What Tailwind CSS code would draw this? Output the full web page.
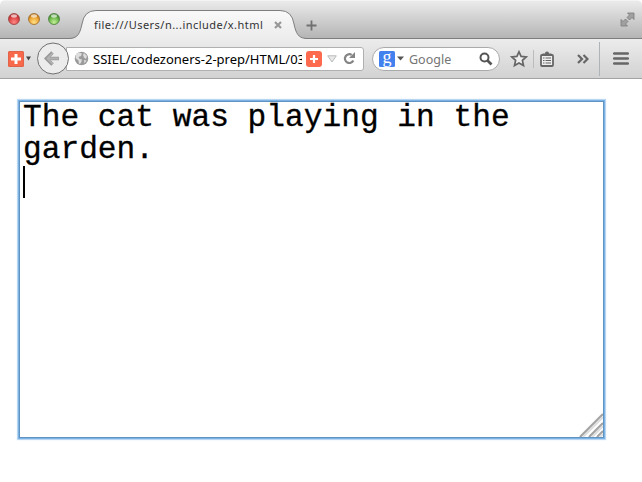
<!DOCTYPE html>
<html lang="en">
<head>
<meta charset="utf-8">
<title>x.html</title>
<script src="https://cdn.jsdelivr.net/npm/@tailwindcss/browser@4"></script>
</head>
<body class="w-[642px] h-[482px] overflow-hidden bg-white font-['Noto_Sans',sans-serif]">
<header class="h-[79px] flex flex-col rounded-t-[5px] overflow-hidden border-b border-[#a3a3a3]">
  <div class="relative h-[39px] flex items-center bg-linear-to-b from-[#ebebeb] to-[#b3b3b3] border-t border-[#f3f3f3]">
    <svg class="absolute left-0 -top-px" width="642" height="39" viewBox="0 0 642 39">
      <defs>
        <linearGradient id="tab" x1="0" y1="0" x2="0" y2="1"><stop offset="0" stop-color="#f9f9f9"/><stop offset="1" stop-color="#ececec"/></linearGradient>
      </defs>
      <path d="M70 39 C78 38 80 33 82 24 Q84 10.500 96 10.500 H280 Q292 10.500 294 24 C296 33 298 38 308 39Z" fill="url(#tab)"/>
      <path d="M0 38.500 H70 C78 38 80 33 82 24 Q84 10.500 96 10.500 H280 Q292 10.500 294 24 C296 33 298 38 306 38.500 H642" fill="none" stroke="#7e7e7e"/>
    </svg>
    <div class="relative flex gap-[8px] pl-[8px] -mt-[2px]">
      <svg width="52" height="12" viewBox="0 0 52 12">
        <defs>
          <radialGradient id="r" cx=".5" cy=".8" r=".7"><stop offset="0" stop-color="#ff8a87"/><stop offset=".6" stop-color="#e04a4a"/><stop offset="1" stop-color="#b82c2e"/></radialGradient>
          <radialGradient id="y" cx=".5" cy=".8" r=".7"><stop offset="0" stop-color="#ffe28a"/><stop offset=".6" stop-color="#f0aa38"/><stop offset="1" stop-color="#c27a1c"/></radialGradient>
          <radialGradient id="g" cx=".5" cy=".8" r=".7"><stop offset="0" stop-color="#c4f09a"/><stop offset=".6" stop-color="#74bd52"/><stop offset="1" stop-color="#3f8a30"/></radialGradient>
        </defs>
        <g stroke-width=".8">
          <circle cx="6" cy="6" r="5.500" fill="url(#r)" stroke="#98403e"/>
          <circle cx="26" cy="6" r="5.500" fill="url(#y)" stroke="#9a6a2c"/>
          <circle cx="46" cy="6" r="5.500" fill="url(#g)" stroke="#4d7c3e"/>
        </g>
        <g fill="#fff" opacity=".65"><ellipse cx="6" cy="3" rx="3" ry="1.700"/><ellipse cx="26" cy="3" rx="3" ry="1.700"/><ellipse cx="46" cy="3" rx="3" ry="1.700"/></g>
      </svg>
    </div>
    <div class="relative flex items-center pl-[34px] pt-[10px]">
      <span class="w-[180px] text-[11px] leading-[14px] tracking-[0.470px] text-[#333] whitespace-nowrap">file:///Users/n...include/x.html</span>
      <svg width="8" height="8" viewBox="0 0 8 8"><path d="M1 1L7 7M7 1L1 7" stroke="#989898" stroke-width="2.200"/></svg>
      <svg class="ml-[24px]" width="11" height="11" viewBox="0 0 11 11"><path d="M5.500 .5V10.500M.5 5.500H10.500" stroke="#707070" stroke-width="1.800"/></svg>
    </div>
    <svg class="relative ml-auto mr-[7px] -mt-[2px]" width="15" height="15" viewBox="0 0 15 15"><path d="M7.500 1H14V7.500L12 5.500L9.500 8L7 5.500L9.500 3ZM1 7.500L3 9.500L5.500 7L8 9.500L5.500 12L7.500 14H1Z" fill="#a0a0a0" stroke="#7b7b7b" stroke-width=".8"/></svg>
  </div>
  <div class="h-[39px] flex items-center bg-linear-to-b from-[#ececec] to-[#d2d2d2]">
    <svg class="ml-[8px]" width="16" height="16" viewBox="0 0 16 16"><rect width="16" height="16" rx="1.500" fill="#f8694b"/><rect x=".5" y=".5" width="15" height="15" rx="1.500" fill="none" stroke="#e06449"/><path d="M8 3V13M3 8H13" stroke="#fff" stroke-width="3"/></svg>
    <svg class="ml-[2px]" width="5" height="5" viewBox="0 0 5 5"><path d="M0 0.500H5L2.500 4.500Z" fill="#444"/></svg>
    <svg class="relative z-10 ml-[6px]" width="33" height="33" viewBox="0 0 33 33"><circle cx="16" cy="16.500" r="15.500" fill="#ececec" stroke="#707070"/><path d="M15.500 10.500L9.500 16.500L15.500 22.500M9.500 16.500H22" fill="none" stroke="#999" stroke-width="3.600"/><path d="M15.800 11L10.500 16.500L15.800 22M10.500 16.500H21.500" fill="none" stroke="#b2b2b2" stroke-width="1.800"/></svg>
    <div class="-ml-[4px] w-[298px] h-[24px] flex items-center bg-white border border-[#b0b0b0] rounded-r-[3px]">
      <svg class="ml-[7px] shrink-0" width="15" height="15" viewBox="0 0 15 15"><circle cx="7.500" cy="7.500" r="6.800" fill="#9b9b9b"/><path d="M2 3L5 1.500L8 2.500L7 5L4.500 6L5.500 8L8 8.500L7 12L5 13L4.500 9.500L1.500 7ZM10 2L13 5L12 8L10 6.500L9 4ZM10 9L12.500 9.500L10.500 12.500Z" fill="#dedede"/></svg>
      <div class="ml-[4px] w-[209px] overflow-hidden whitespace-nowrap text-[13px] leading-[20px] text-black">SSIEL/codezoners-2-prep/HTML/03</div>
      <svg class="ml-[4px] shrink-0" width="16" height="16" viewBox="0 0 16 16"><rect width="16" height="16" rx="3" fill="#fd6a4d"/><path d="M8 4V12M4 8H12" stroke="#fff" stroke-width="2.200"/></svg>
      <svg class="ml-[5px] shrink-0" width="10" height="8" viewBox="0 0 10 8"><path d="M.7 .8H9.300L5 7Z" fill="#e9e9e9" stroke="#b7bbb7"/></svg>
      <svg class="ml-[6px] shrink-0" width="13" height="13" viewBox="0 0 13 13"><path d="M10.300 8.500A4.400 4.400 0 1 1 8.700 2.900" fill="none" stroke="#858585" stroke-width="2.200"/><path d="M6 6H12V0Z" fill="#858585"/></svg>
    </div>
    <div class="ml-[8px] w-[128px] h-[24px] flex items-center bg-white border border-[#aaa] rounded-full">
      <div class="ml-[6px] w-[16px] h-[16px] rounded-[1.500px] bg-[#4381ee] flex justify-center text-white font-['Liberation_Serif',serif] text-[18px] leading-[12px] shrink-0">g</div>
      <svg class="ml-[2px]" width="7" height="5" viewBox="0 0 7 5"><path d="M0 .5H7L3.500 4.500Z" fill="#555"/></svg>
      <span class="ml-[5px] w-[66px] pt-[2px] text-[12.500px] leading-[18px] text-[#757575]">Google</span>
      <svg class="ml-[4px] shrink-0" width="14" height="14" viewBox="0 0 14 14"><circle cx="5.500" cy="5.500" r="4" fill="none" stroke="#555" stroke-width="2"/><path d="M8.500 8.500L12.500 12.500" stroke="#555" stroke-width="2.600"/></svg>
    </div>
    <svg class="ml-[10px]" width="18" height="18" viewBox="0 0 18 18"><path d="M9 1.800L11.100 6.400L16.200 7L12.400 10.400L13.500 15.500L9 12.900L4.500 15.500L5.600 10.400L1.800 7L6.900 6.400Z" fill="#eee" stroke="#666" stroke-width="1.700"/></svg>
    <div class="ml-[5px] w-px h-[18px] bg-[#bcbcbc]"></div>
    <svg class="ml-[6px]" width="14" height="16" viewBox="0 0 14 16"><rect x="1" y="4" width="12" height="11" rx="1" fill="#eee" stroke="#666" stroke-width="1.800"/><path d="M2.500 4V2.500H5Q5 .5 7 .5T9 2.500H11.500V4Z" fill="#666"/><path d="M3 7H4.500M5.500 7H11M3 9.500H4.500M5.500 9.500H11M3 12H4.500M5.500 12H11" stroke="#666" stroke-width="1.200"/></svg>
    <svg class="ml-[23px]" width="12" height="10" viewBox="0 0 12 10"><path d="M1 1L5 5L1 9M6.500 1L10.500 5L6.500 9" fill="none" stroke="#666" stroke-width="2.200"/></svg>
    <div class="ml-[10px] w-px h-[34px] bg-[#adb3b7]"></div>
    <svg class="ml-[13px]" width="16" height="13" viewBox="0 0 16 13"><path d="M1.200 1.500H14.800M1.200 6.500H14.800M1.200 11.500H14.800" stroke="#666" stroke-width="2.500" stroke-linecap="round"/></svg>
  </div>
</header>
<main class="pl-[19px] pt-[22px]">
  <div class="relative w-[585px] h-[337px] border border-[#5e93c2] shadow-[0_0_1px_1px_#7db2e4,0_0_1px_2px_#c4def5] pl-[3px] font-['Liberation_Mono',monospace] text-[31.200px] leading-[32px] text-black [-webkit-text-stroke:0.3px_black]">
    <p class="whitespace-pre">The cat was playing in the
garden.</p>
    <div class="w-[2px] h-[32px] bg-black"></div>
    <svg class="absolute right-0 bottom-0" width="24" height="24" viewBox="0 0 24 24"><g fill="none"><path d="M1 24L24 1M10 24L24 10M18 24L24 18" stroke="#a3a3a3" stroke-width="2.200"/><path d="M4 24L24 4M13 24L24 13M21 24L24 21" stroke="#ddd" stroke-width="2"/></g></svg>
  </div>
</main>
</body>
</html>
